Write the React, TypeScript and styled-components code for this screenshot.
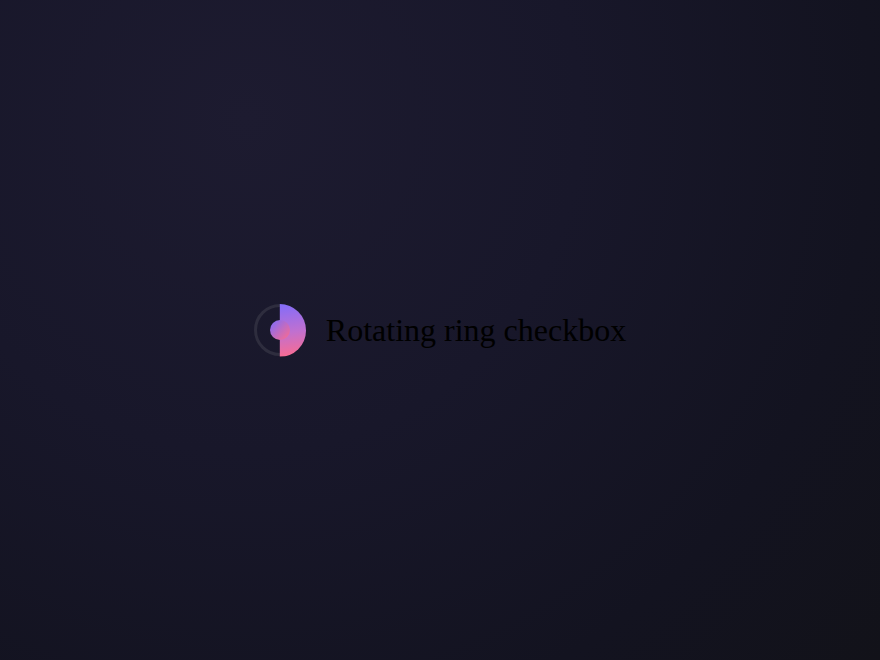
import { useState } from 'react';
import styled, { createGlobalStyle } from 'styled-components';

const GlobalStyle = createGlobalStyle`
  html, body {
    margin: 0;
    padding: 0;
  }
  body {
    min-height: 100vh;
    background: radial-gradient(circle at 28% 18%, #1d1b30 0%, #18172a 40%, #131320 75%, #121219 100%);
  }
`;

const Page = styled.div`
  min-height: 100vh;
  display: flex;
  align-items: center;
  justify-content: center;
`;

const Label = styled.label`
  display: flex;
  align-items: center;
  gap: 20px;
  font-family: 'Liberation Serif', 'Times New Roman', serif;
  font-size: 32px;
  color: #000;
  cursor: pointer;
`;

const HiddenInput = styled.input`
  position: absolute;
  opacity: 0;
  width: 0;
  height: 0;
`;

const Ring = styled.span<{ $checked: boolean }>`
  position: relative;
  width: 52px;
  height: 52px;
  box-sizing: border-box;
  border-radius: 50%;
  border: 3.5px solid #2e2d3e;
  flex-shrink: 0;

  /* gradient half that sweeps round */
  &::before {
    content: '';
    position: absolute;
    inset: -3.5px;
    border-radius: 50%;
    background: linear-gradient(172deg, #7a6cff 0%, #c070d0 55%, #ff6b8b 100%);
    clip-path: inset(0 0 0 50%);
    transform: rotate(${(p) => (p.$checked ? 0 : 180)}deg);
    transition: transform 0.4s ease;
  }

  &::after {
    content: '';
    position: absolute;
    top: 50%;
    left: 50%;
    width: 20px;
    height: 20px;
    margin: -10px 0 0 -10px;
    border-radius: 50%;
    background: linear-gradient(135deg, #7a6cff 0%, #ff6b8b 100%);
  }
`;

function App() {
  const [checked, setChecked] = useState(true);

  return (
    <>
      <GlobalStyle />
      <Page>
        <Label>
          <HiddenInput
            type='checkbox'
            checked={checked}
            onChange={(e) => setChecked(e.target.checked)}
          />
          <Ring $checked={checked} />
          Rotating ring checkbox
        </Label>
      </Page>
    </>
  );
}

export default App;
